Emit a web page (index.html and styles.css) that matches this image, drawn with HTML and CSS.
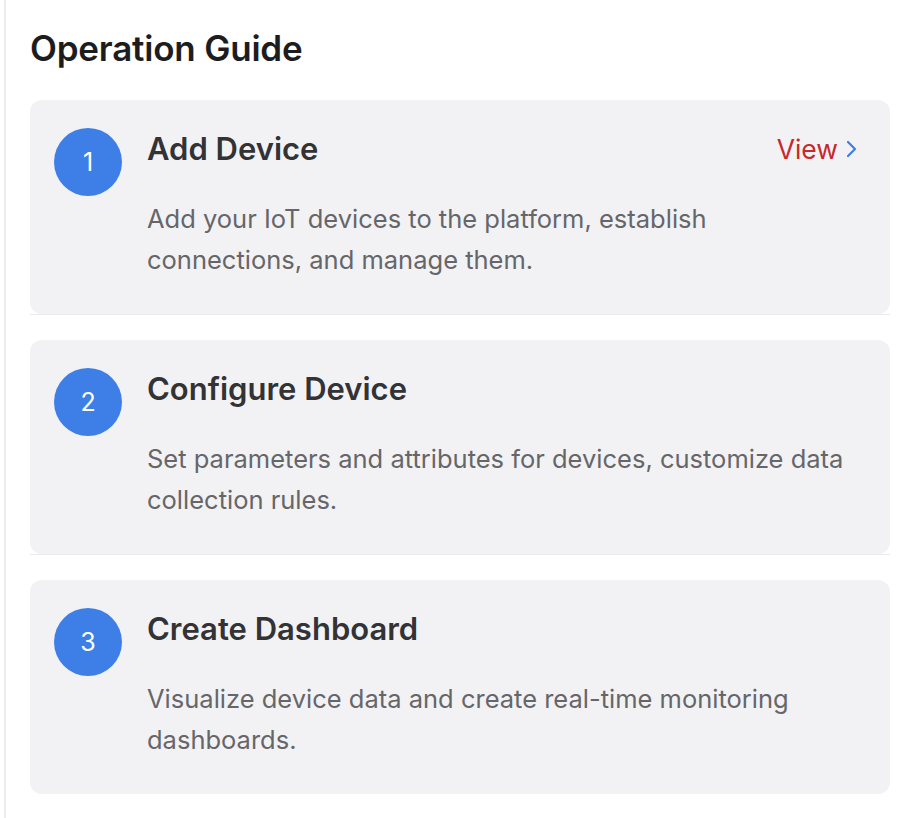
FILE: index.html
```html
<!DOCTYPE html>
<html lang="en">
<head>
<meta charset="utf-8">
<title>Operation Guide</title>
<link rel="stylesheet" href="styles.css">
</head>
<body>
<div class="panel">
  <h1 class="panel-title">Operation Guide</h1>
  <ul class="steps">
    <li class="step">
      <div class="card">
        <div class="num">1</div>
        <div class="body">
          <div class="head">
            <h2 class="step-title">Add Device</h2>
            <a class="view" href="#">View
              <svg class="chev" width="12" height="20" viewBox="0 0 12 20"><polyline points="2,3 9,10 2,17" fill="none" stroke="currentColor" stroke-width="2.2" stroke-linecap="round" stroke-linejoin="round"/></svg>
            </a>
          </div>
          <p class="desc">Add your IoT devices to the platform, establish connections, and manage them.</p>
        </div>
      </div>
    </li>
    <li class="step">
      <div class="card">
        <div class="num">2</div>
        <div class="body">
          <div class="head">
            <h2 class="step-title">Configure Device</h2>
          </div>
          <p class="desc">Set parameters and attributes for devices, customize data collection rules.</p>
        </div>
      </div>
    </li>
    <li class="step">
      <div class="card">
        <div class="num">3</div>
        <div class="body">
          <div class="head">
            <h2 class="step-title">Create Dashboard</h2>
          </div>
          <p class="desc">Visualize device data and create real-time monitoring dashboards.</p>
        </div>
      </div>
    </li>
  </ul>
</div>
</body>
</html>
```

FILE: styles.css
```css
html, body {
  margin: 0;
  padding: 0;
  background: #ffffff;
  font-family: Inter, "Noto Sans", sans-serif;
}
.panel {
  margin-left: 4px;
  border-left: 2px solid #ececf0;
  padding: 25px 20px 0 24px;
  min-height: 818px;
  box-sizing: border-box;
}
.panel-title {
  margin: 0 0 29px 0;
  font-size: 35px;
  line-height: 46px;
  font-weight: 600;
  color: #1d1d1f;
  letter-spacing: -0.2px;
}
.steps {
  list-style: none;
  margin: 0;
  padding: 0;
}
.step {
  border-bottom: 1px solid #ebebef;
  margin-bottom: 25px;
}
.step:last-child {
  border-bottom: none;
  margin-bottom: 0;
}
.card {
  background: #f2f2f5;
  border-radius: 12px;
  display: flex;
  gap: 25px;
  padding: 28px 32px 34px 24px;
  min-height: 214px;
  box-sizing: border-box;
}
.num {
  flex: 0 0 68px;
  width: 68px;
  height: 68px;
  border-radius: 50%;
  background: #3d7fe6;
  color: #ffffff;
  font-size: 25px;
  display: flex;
  align-items: center;
  justify-content: center;
}
.body {
  flex: 1;
}
.head {
  display: flex;
  justify-content: space-between;
  align-items: center;
  height: 42px;
}
.step-title {
  margin: 0;
  font-size: 31px;
  line-height: 42px;
  font-weight: 600;
  color: #333336;
}
.view {
  display: flex;
  align-items: center;
  gap: 8px;
  color: #c6282d;
  font-size: 26.5px;
  text-decoration: none;
}
.chev {
  color: #3d7fe6;
}
.desc {
  margin: 28px 0 0 0;
  font-size: 25.5px;
  line-height: 41px;
  color: #666669;
}
```
